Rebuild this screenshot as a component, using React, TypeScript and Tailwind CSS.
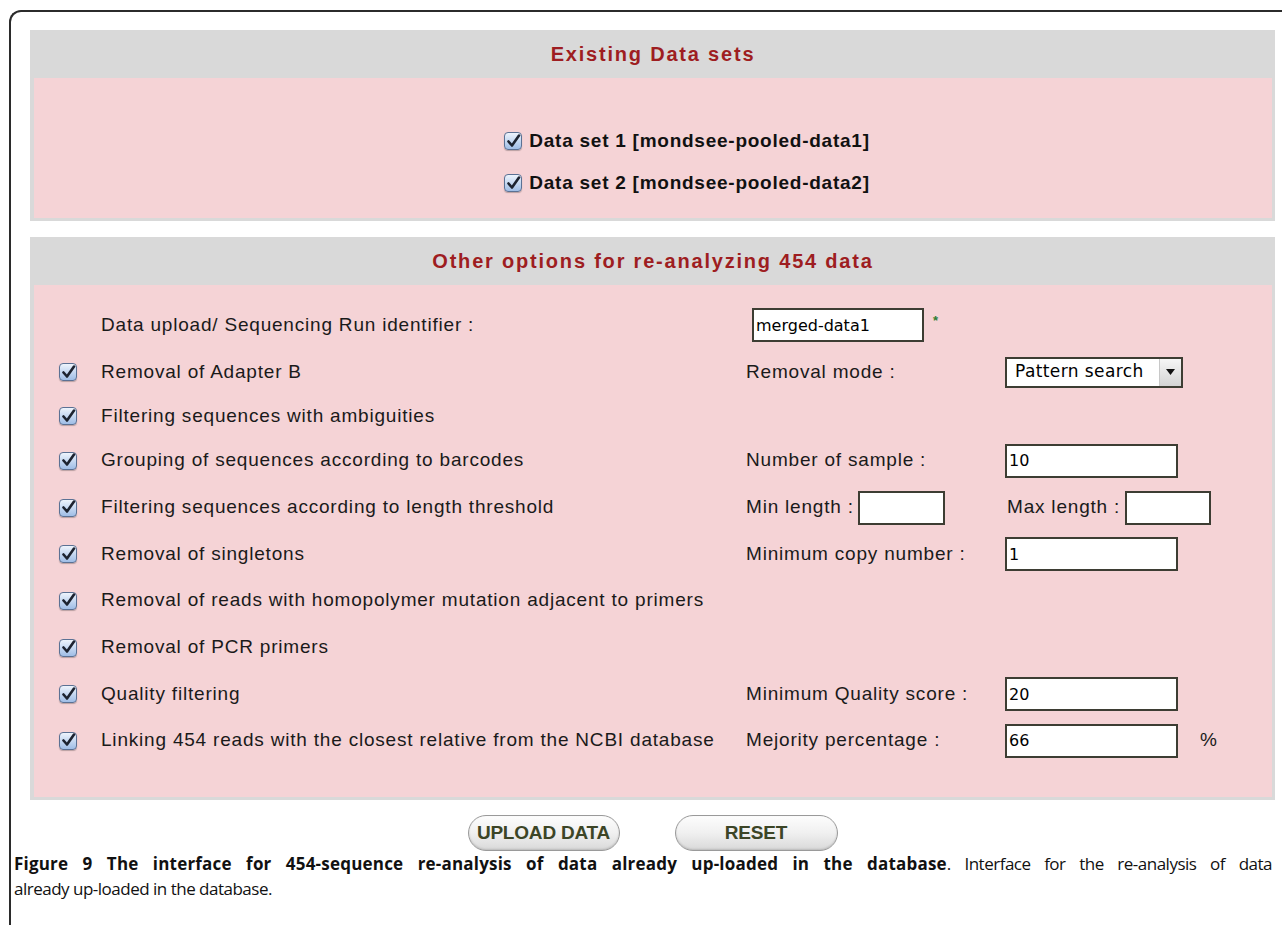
import { useState } from "react";

type Option = {
    label: string;
    checkbox: boolean;
    height: string;
    field?: "identifier" | "mode" | "samples" | "length" | "copies" | "quality" | "majority";
};

const options: Option[] = [
    { label: "Data upload/ Sequencing Run identifier :", checkbox: false, height: "h-[48px]", field: "identifier" },
    { label: "Removal of Adapter B", checkbox: true, height: "h-[46px]", field: "mode" },
    { label: "Filtering sequences with ambiguities", checkbox: true, height: "h-[42px]" },
    { label: "Grouping of sequences according to barcodes", checkbox: true, height: "h-[47px]", field: "samples" },
    { label: "Filtering sequences according to length threshold", checkbox: true, height: "h-[47px]", field: "length" },
    { label: "Removal of singletons", checkbox: true, height: "h-[46px]", field: "copies" },
    { label: "Removal of reads with homopolymer mutation adjacent to primers", checkbox: true, height: "h-[47px]" },
    { label: "Removal of PCR primers", checkbox: true, height: "h-[47px]" },
    { label: "Quality filtering", checkbox: true, height: "h-[46px]", field: "quality" },
    { label: "Linking 454 reads with the closest relative from the NCBI database", checkbox: true, height: "h-[47px]", field: "majority" },
];

const CheckBox = ({ checked, onToggle }: { checked: boolean; onToggle: () => void }) => (
    <span
        onClick={onToggle}
        className="inline-flex w-[18px] h-[18px] rounded-[4px] border border-[#5b7194] bg-gradient-to-b from-[#eef4fc] to-[#9fbde6] items-center justify-center cursor-pointer shadow-[0_1px_1px_rgba(0,0,0,0.25)]"
    >
        {checked && (
            <svg width="15" height="15" viewBox="0 0 15 15">
                <path d="M2.5 7.5 L6 11.5 L13 1.5" stroke="#1d2330" strokeWidth="2.6" fill="none" strokeLinecap="round" strokeLinejoin="round" />
            </svg>
        )}
    </span>
);

const TextBox = ({ value, width }: { value?: string; width: string }) => (
    <input
        type="text"
        defaultValue={value}
        className={`${width} h-[34px] bg-white border-2 border-[#3d3d33] px-[2px] text-[16px] tracking-normal text-black outline-none`}
        style={{ fontFamily: "'DejaVu Sans', sans-serif" }}
    />
);

const Field = ({ kind }: { kind: Option["field"] }) => {
    if (kind === "identifier") {
        return (
            <div className="flex items-center">
                <span className="ml-[6px]"><TextBox value="merged-data1" width="w-[172px]" /></span>
                <span className="ml-[9px] -mt-[8px] text-[#2e7d32] text-[13px] font-bold">*</span>
            </div>
        );
    }
    if (kind === "length") {
        return (
            <div className="flex items-center">
                <span className="w-[112px]">Min length :</span>
                <TextBox width="w-[87px]" />
                <span className="ml-[62px] w-[118px]">Max length :</span>
                <TextBox width="w-[86px]" />
            </div>
        );
    }

    const labels: Record<string, string> = {
        mode: "Removal mode :",
        samples: "Number of sample :",
        copies: "Minimum copy number :",
        quality: "Minimum Quality score :",
        majority: "Mejority percentage :",
    };
    const values: Record<string, string> = { samples: "10", copies: "1", quality: "20", majority: "66" };

    return (
        <div className="flex items-center">
            <span className="w-[259px]">{labels[kind as string]}</span>
            {kind === "mode" ? (
                <div className="w-[178px] h-[31px] border-2 border-[#3d3d33] bg-white flex items-stretch">
                    <span className="flex-1 pl-[8px] flex items-center text-[17px] tracking-[0.4px] text-black" style={{ fontFamily: "'DejaVu Sans', sans-serif" }}>Pattern search</span>
                    <span className="w-[22px] bg-gradient-to-b from-[#f6f6f6] to-[#d4d4d4] border-l border-[#c8c8c8] flex items-center justify-center">
                        <svg width="9" height="6" viewBox="0 0 9 6"><path d="M0 0 H9 L4.5 6 Z" fill="#111" /></svg>
                    </span>
                </div>
            ) : (
                <TextBox value={values[kind as string]} width="w-[173px]" />
            )}
            {kind === "majority" && <span className="ml-[22px]">%</span>}
        </div>
    );
};

const PanelHeader = ({ title }: { title: string }) => (
    <div className="h-[48px] flex items-center justify-center text-[20px] tracking-[1.8px] font-bold text-[#9e1d21]">{title}</div>
);

const App = () => {
    const [dataSets, setDataSets] = useState([true, true]);
    const [checked, setChecked] = useState<boolean[]>(options.map(() => true));

    return (
        <div className="w-[1282px] h-[925px] overflow-hidden bg-white pl-[9px] pt-[10px]" style={{ fontFamily: "'Liberation Sans', Arial, sans-serif" }}>
            <div className="w-[1300px] h-[940px] border-l-2 border-t-2 border-[#2b2b2b] rounded-tl-[12px] pt-[18px]">
                <div className="w-[1245px] ml-[19px] flex flex-col gap-[16px]">
                    {/* existing data sets */}
                    <div className="bg-[#d9d9d9] pl-[4px] pr-[3px] pb-[3px]">
                        <PanelHeader title="Existing Data sets" />
                        <div className="bg-[#f5d3d6] pt-[42px] pb-[14px] pl-[68px] flex flex-col items-center text-[19px] tracking-[0.75px] font-bold text-[#111]">
                            {["Data set 1 [mondsee-pooled-data1]", "Data set 2 [mondsee-pooled-data2]"].map((name, i) => (
                                <div key={name} className="h-[42px] flex items-center gap-[7px]">
                                    <CheckBox checked={dataSets[i]} onToggle={() => setDataSets(dataSets.map((v, j) => (j === i ? !v : v)))} />
                                    <span>{name}</span>
                                </div>
                            ))}
                        </div>
                    </div>

                    {/* re-analysis options */}
                    <div className="bg-[#d9d9d9] pl-[4px] pr-[3px] pb-[3px]">
                        <PanelHeader title="Other options for re-analyzing 454 data" />
                        <div className="bg-[#f5d3d6] pt-[16px] pb-[33px] pl-[25px] text-[19px] tracking-[0.8px] text-[#1a1a1a]">
                            {options.map((opt, i) => (
                                <div key={opt.label} className={`${opt.height} flex items-center`}>
                                    <div className="w-[42px] flex items-center">
                                        {opt.checkbox && (
                                            <CheckBox checked={checked[i]} onToggle={() => setChecked(checked.map((v, j) => (j === i ? !v : v)))} />
                                        )}
                                    </div>
                                    <div className="w-[645px]">{opt.label}</div>
                                    {opt.field && <Field kind={opt.field} />}
                                </div>
                            ))}
                        </div>
                    </div>

                    {/* actions */}
                    <div className="-mt-[1px] flex justify-center gap-[55px]">
                        <button className="w-[152px] h-[36px] rounded-full border border-[#9a9a9a] bg-gradient-to-b from-[#fdfdfd] via-[#f0f0f0] to-[#d9d9d9] text-[19px] font-bold tracking-[-0.2px] text-[#3c4526] shadow-[inset_0_-1px_2px_rgba(0,0,0,0.15)]">
                            UPLOAD DATA
                        </button>
                        <button className="w-[163px] h-[36px] rounded-full border border-[#9a9a9a] bg-gradient-to-b from-[#fdfdfd] via-[#f0f0f0] to-[#d9d9d9] text-[19px] font-bold tracking-[-0.2px] text-[#3c4526] shadow-[inset_0_-1px_2px_rgba(0,0,0,0.15)]">
                            RESET
                        </button>
                    </div>
                </div>

                {/* caption */}
                <div className="w-[1258px] ml-[3px] text-[17px] leading-[25px] tracking-[-0.5px] text-[#111]" style={{ fontFamily: "'Open Sans', sans-serif" }}>
                    <p className="text-justify [text-align-last:justify]">
                        <span className="font-bold tracking-[0.2px]">Figure 9 The interface for 454-sequence re-analysis of data already up-loaded in the database</span>. Interface for the re-analysis of data
                    </p>
                    <p>already up-loaded in the database.</p>
                </div>
            </div>
        </div>
    );
};

export default App;
